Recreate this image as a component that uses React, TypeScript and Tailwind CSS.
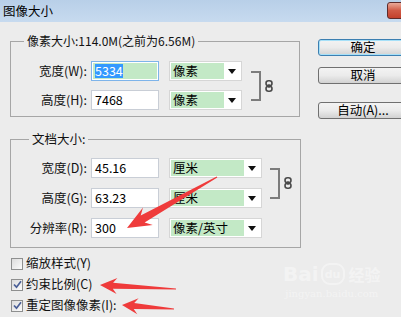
import React from "react";

type P = [number, number];

function arrowPoints(tip: P, tail: P, headLen: number, headHalf: number, neckHalf: number, tailHalf: number, notch: number): string {
  const dx = tip[0] - tail[0];
  const dy = tip[1] - tail[1];
  const len = Math.hypot(dx, dy);
  const ux = dx / len;
  const uy = dy / len;
  const nx = -uy;
  const ny = ux;
  const B: P = [tip[0] - headLen * ux, tip[1] - headLen * uy];
  const N: P = [tip[0] - (headLen - notch) * ux, tip[1] - (headLen - notch) * uy];
  const pts: P[] = [
    tip,
    [B[0] + headHalf * nx, B[1] + headHalf * ny],
    [N[0] + neckHalf * nx, N[1] + neckHalf * ny],
    [tail[0] + tailHalf * nx, tail[1] + tailHalf * ny],
    [tail[0] - tailHalf * nx, tail[1] - tailHalf * ny],
    [N[0] - neckHalf * nx, N[1] - neckHalf * ny],
    [B[0] - headHalf * nx, B[1] - headHalf * ny],
  ];
  return pts.map((p) => `${p[0].toFixed(1)},${p[1].toFixed(1)}`).join(" ");
}

function Caret() {
  return (
    <svg width="8" height="5" viewBox="0 0 8 5">
      <path d="M0 0 H8 L4 5 Z" fill="#111" />
    </svg>
  );
}

function Select({ text, w, greenW }: { text: string; w: string; greenW: string }) {
  return (
    <div className={`${w} h-[20px] border border-[#d6d6d6] bg-white flex items-center p-[1px]`}>
      <div className={`${greenW} h-full bg-[#c3e9c6] flex items-center pl-[2px] text-[12.5px] text-black`}>{text}</div>
      <div className="flex-1 flex items-center justify-center">
        <Caret />
      </div>
    </div>
  );
}

function Input({ value }: { value: string }) {
  return (
    <div className="w-[68px] h-[20px] border border-[#c9ced6] bg-white flex items-center pl-[3px] text-[12.5px] text-black">
      {value}
    </div>
  );
}

function Label({ text }: { text: string }) {
  return <div className="w-[77px] text-right pr-[1px] text-[12.5px] text-[#111]">{text}</div>;
}

function Chain() {
  return (
    <svg width="8" height="12" viewBox="0 0 8 12">
      <rect x="1" y="0.8" width="6" height="5" rx="2.5" fill="none" stroke="#4a4a4a" strokeWidth="1.6" />
      <rect x="1" y="6.2" width="6" height="5" rx="2.5" fill="none" stroke="#4a4a4a" strokeWidth="1.6" />
      <path d="M4 4 V8" stroke="#4a4a4a" strokeWidth="1.4" />
    </svg>
  );
}

function Bracket({ h }: { h: string }) {
  return <div className={`w-[10px] ${h} border-t-2 border-b-2 border-r-2 border-[#7c7c7c]`} />;
}

function Checkbox({ checked, label }: { checked: boolean; label: string }) {
  return (
    <div className="h-[21px] flex items-center gap-[2px] pl-[1px]">
      <div className="w-[12px] h-[12px] border border-[#8e8f8f] bg-gradient-to-br from-[#dcdcdc] to-[#fbfbfb] flex items-center justify-center">
        {checked && (
          <svg width="9" height="9" viewBox="0 0 9 9">
            <path d="M1 4.5 L3.5 7.2 L8 1.2" fill="none" stroke="#4a5f97" strokeWidth="1.7" />
          </svg>
        )}
      </div>
      <div className="text-[12.5px] text-[#111] ml-[1px]">{label}</div>
    </div>
  );
}

function Btn({ text, focused }: { text: string; focused?: boolean }) {
  return (
    <div
      className={`w-[90px] h-[17px] rounded-[3px] border ${focused ? "border-[#3c7fb1] shadow-[inset_0_0_0_1px_#a6e0f8]" : "border-[#707070]"} bg-gradient-to-b from-[#f3f3f3] via-[#ebebeb] to-[#d2d2d2] flex items-center justify-center text-[12.5px] text-black leading-none`}
    >
      {text}
    </div>
  );
}

export default function App() {
  const a1 = arrowPoints([127, 228], [217, 177], 24, 10, 4, 0.6, 6);
  const a2 = arrowPoints([100, 285], [176, 289], 17, 8, 3, 0.6, 4);
  const a3 = arrowPoints([122, 305], [174, 309], 16, 8, 3, 0.6, 4);
  return (
    <div className="relative w-[401px] h-[317px] overflow-hidden bg-[#ececec] font-['Noto_Sans_CJK_SC','Microsoft_YaHei',sans-serif]">
      {/* title bar */}
      <div className="h-[22px] bg-gradient-to-b from-[#b8cfe8] to-[#c7daef] flex items-start justify-between">
        <div className="pl-[3px] pt-[3px] text-[12.5px] leading-[16px] text-black">图像大小</div>
        <div className="shrink-0 mt-[2px] mr-[-29px] w-[43px] h-[17px] rounded-[3px] border border-[#5e2c2c] bg-gradient-to-b from-[#e9a999] via-[#d05a46] to-[#c3402c] flex items-center justify-center">
          <svg width="10" height="8" viewBox="0 0 10 8">
            <path d="M1 0.5 L9 7.5 M9 0.5 L1 7.5" stroke="#fff" strokeWidth="2.2" />
          </svg>
        </div>
      </div>

      {/* body */}
      <div className="flex">
        {/* left column */}
        <div className="shrink-0 w-[308px] pl-[10px] pt-[11px]">
          <fieldset className="w-[290px] border border-[#a6a6a6] pb-[6px]">
            <legend className="ml-[13px] px-[3px] text-[12px] leading-[16px] text-[#111]">像素大小:114.0M(之前为6.56M)</legend>
            <div className="flex items-center pt-[12px]">
              <div className="flex flex-col gap-[9px]">
                <div className="flex items-center h-[20px]">
                  <Label text="宽度(W):" />
                  <div className="ml-[3px] w-[68px] h-[20px] border border-[#7eb4ea] bg-white p-[1px]">
                    <div className="h-full bg-[#c3e9c6] flex items-center pl-[2px]">
                      <span className="bg-[#3399ff] text-white text-[12.5px] leading-[14px]">5334</span>
                    </div>
                  </div>
                  <div className="ml-[10px]">
                    <Select text="像素" w="w-[73px]" greenW="w-[53px]" />
                  </div>
                </div>
                <div className="flex items-center h-[20px]">
                  <Label text="高度(H):" />
                  <div className="ml-[3px]">
                    <Input value="7468" />
                  </div>
                  <div className="ml-[10px]">
                    <Select text="像素" w="w-[73px]" greenW="w-[53px]" />
                  </div>
                </div>
              </div>
              <div className="ml-[9px] flex items-center">
                <Bracket h="h-[30px]" />
                <div className="ml-[4px]">
                  <Chain />
                </div>
              </div>
            </div>
          </fieldset>

          <fieldset className="mt-[14px] w-[291px] border border-[#a6a6a6] pb-[9px]">
            <legend className="ml-[18px] px-[3px] text-[12.5px] leading-[16px] text-[#111]">文档大小:</legend>
            <div className="pt-[11px] flex flex-col gap-[10px]">
              <div className="flex items-center">
                <div className="flex flex-col gap-[10px]">
                  <div className="flex items-center h-[20px]">
                    <Label text="宽度(D):" />
                    <div className="ml-[3px]">
                      <Input value="45.16" />
                    </div>
                    <div className="ml-[10px]">
                      <Select text="厘米" w="w-[93px]" greenW="w-[73px]" />
                    </div>
                  </div>
                  <div className="flex items-center h-[20px]">
                    <Label text="高度(G):" />
                    <div className="ml-[3px]">
                      <Input value="63.23" />
                    </div>
                    <div className="ml-[10px]">
                      <Select text="厘米" w="w-[93px]" greenW="w-[73px]" />
                    </div>
                  </div>
                </div>
                <div className="ml-[8px] flex items-center">
                  <Bracket h="h-[31px]" />
                  <div className="ml-[4px]">
                    <Chain />
                  </div>
                </div>
              </div>
              <div className="flex items-center h-[20px]">
                <Label text="分辨率(R):" />
                <div className="ml-[3px]">
                  <Input value="300" />
                </div>
                <div className="ml-[10px]">
                  <Select text="像素/英寸" w="w-[93px]" greenW="w-[73px]" />
                </div>
              </div>
            </div>
          </fieldset>

          <div className="mt-[5px] flex flex-col">
            <Checkbox checked={false} label="缩放样式(Y)" />
            <Checkbox checked={true} label="约束比例(C)" />
            <Checkbox checked={true} label="重定图像像素(I):" />
          </div>
        </div>

        {/* right column */}
        <div className="shrink-0 ml-[10px] pt-[17px] flex flex-col">
          <Btn text="确定" focused />
          <div className="mt-[11px]">
            <Btn text="取消" />
          </div>
          <div className="mt-[18px]">
            <Btn text="自动(A)..." />
          </div>
        </div>
      </div>

      {/* watermark */}
      <div className="absolute left-[283px] top-[262px] flex flex-col items-center text-white opacity-40 pointer-events-none">
        <div className="flex items-center font-['DejaVu_Sans',sans-serif]">
          <span className="text-[20px] font-bold leading-[24px]">Bai</span>
          <span className="ml-[2px] w-[24px] h-[22px] rounded-[9px] border-2 border-white flex items-center justify-center text-[11px] font-bold leading-none">du</span>
          <span className="ml-[4px] text-[16px] font-bold leading-[20px] font-['Noto_Sans_CJK_SC',sans-serif]">经验</span>
        </div>
        <div className="text-[10px] leading-[12px] mt-[2px] font-['DejaVu_Serif',serif]">jingyan.baidu.com</div>
      </div>

      {/* arrows */}
      <svg className="absolute inset-0 pointer-events-none" width="401" height="317" viewBox="0 0 401 317">
        <polygon points={a1} fill="#ef3b3b" />
        <polygon points={a2} fill="#ef3b3b" />
        <polygon points={a3} fill="#ef3b3b" />
      </svg>
    </div>
  );
}
